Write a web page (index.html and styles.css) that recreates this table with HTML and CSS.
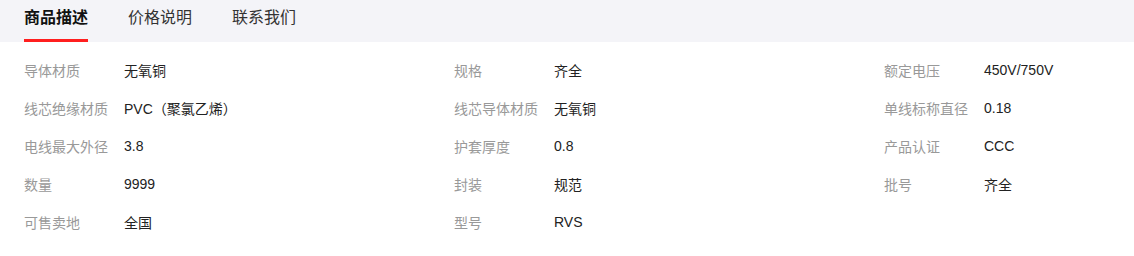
FILE: index.html
```html
<!DOCTYPE html>
<html>
<head>
    <meta charset="utf-8">
    <title>商品详情</title>
    <link rel="stylesheet" href="styles.css">
</head>
<body>
    <div class="tabs">
        <div class="tab active">商品描述</div>
        <div class="tab">价格说明</div>
        <div class="tab">联系我们</div>
    </div>
    <div class="attrs">
        <div class="attr"><span class="label">导体材质</span><span class="value">无氧铜</span></div>
        <div class="attr"><span class="label">规格</span><span class="value">齐全</span></div>
        <div class="attr"><span class="label">额定电压</span><span class="value">450V/750V</span></div>

        <div class="attr"><span class="label">线芯绝缘材质</span><span class="value">PVC（聚氯乙烯）</span></div>
        <div class="attr"><span class="label">线芯导体材质</span><span class="value">无氧铜</span></div>
        <div class="attr"><span class="label">单线标称直径</span><span class="value">0.18</span></div>

        <div class="attr"><span class="label">电线最大外径</span><span class="value">3.8</span></div>
        <div class="attr"><span class="label">护套厚度</span><span class="value">0.8</span></div>
        <div class="attr"><span class="label">产品认证</span><span class="value">CCC</span></div>

        <div class="attr"><span class="label">数量</span><span class="value">9999</span></div>
        <div class="attr"><span class="label">封装</span><span class="value">规范</span></div>
        <div class="attr"><span class="label">批号</span><span class="value">齐全</span></div>

        <div class="attr"><span class="label">可售卖地</span><span class="value">全国</span></div>
        <div class="attr"><span class="label">型号</span><span class="value">RVS</span></div>
    </div>
</body>
</html>
```
FILE: styles.css
```css
body {
    margin: 0;
    font-family: "Liberation Sans", "Noto Sans CJK SC", sans-serif;
    background: #fff;
    color: #222;
}
.tabs {
    display: flex;
    gap: 40px;
    height: 42px;
    padding: 0 24px;
    background-color: #f4f4f8;
    box-sizing: border-box;
}
.tab {
    font-size: 16px;
    line-height: 36px;
    padding-bottom: 3px;
    color: #333;
    border-bottom: 3px solid transparent;
}
.tab.active {
    font-weight: bold;
    color: #111;
    border-bottom-color: #ff1f1f;
}
.attrs {
    display: grid;
    grid-template-columns: 430px 430px 1fr;
    padding: 9px 24px 0;
}
.attr {
    display: flex;
    height: 38px;
    align-items: center;
    font-size: 14px;
}
.label {
    width: 100px;
    flex-shrink: 0;
    color: #999;
}
.value {
    color: #222;
}
```
